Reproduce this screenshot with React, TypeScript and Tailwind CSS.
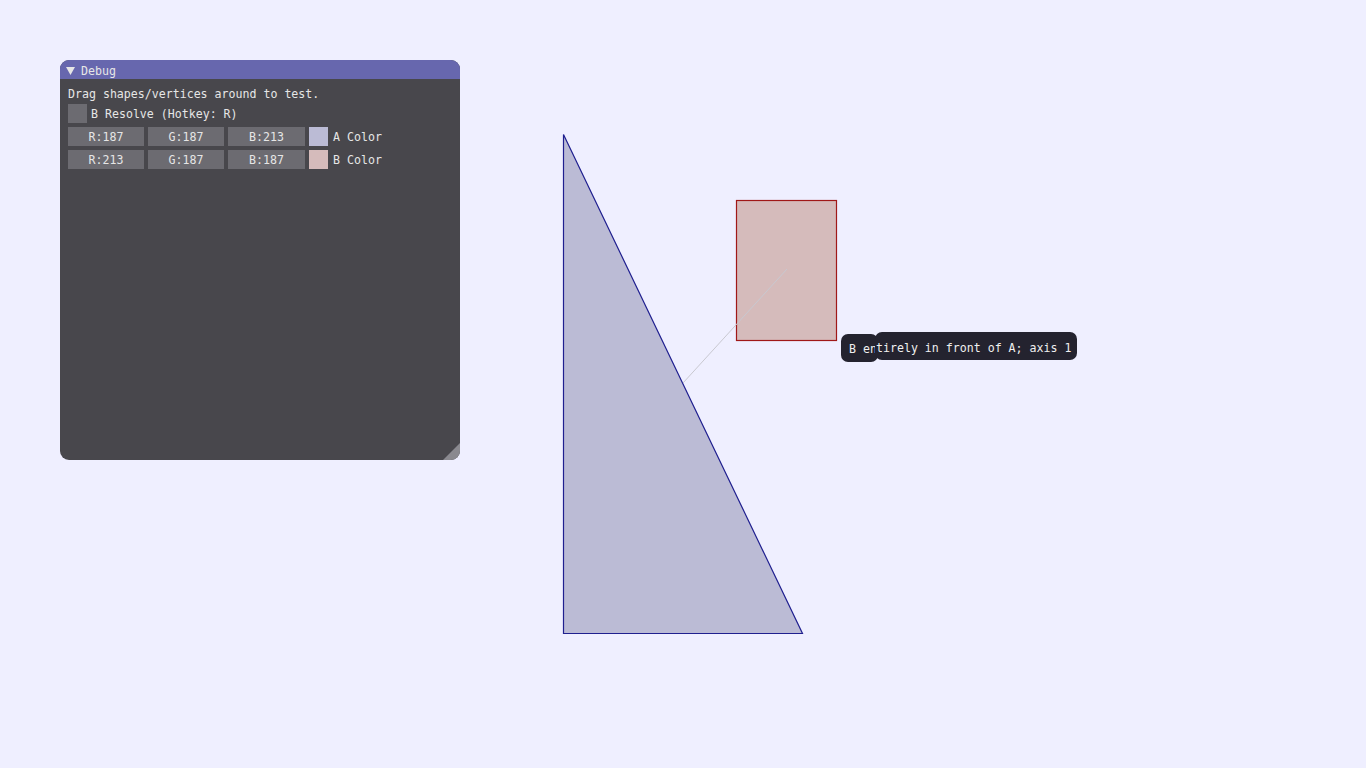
import React from 'react';

const mono = { fontFamily: '"DejaVu Sans Mono", "Liberation Mono", monospace' };

function Field({ label, wide }: { label: string; wide?: boolean }) {
  return (
    <div className={`${wide ? 'w-[77px]' : 'w-[76px]'} h-[19px] bg-[#6c6b71] flex items-center justify-center text-[#e6e6e6]`}>
      <span className="relative top-px">{label}</span>
    </div>
  );
}

function ColorRow({ r, g, b, name, swatch }: { r: string; g: string; b: string; name: string; swatch: string }) {
  return (
    <div className="flex items-center gap-1 h-[19px]">
      <Field label={r} />
      <Field label={g} />
      <Field label={b} wide />
      <div className={`w-[19px] h-[19px] ${swatch}`} />
      <span className="relative top-px ml-px text-[#e6e6e6]">{name}</span>
    </div>
  );
}

export default function App() {
  return (
    <div className="relative w-[1366px] h-[768px] bg-[#efefff] overflow-hidden text-[11.6px] leading-[13px]" style={mono}>
      {/* canvas shapes */}
      <svg className="absolute inset-0" width="1366" height="768" viewBox="0 0 1366 768">
        <polygon points="563.5,134.5 563.5,633.5 802.5,633.5" fill="#bbbbd5" stroke="#1f1f8f" strokeWidth="1.2" />
        <rect x="736.5" y="200.5" width="100" height="140" fill="#d5bbbb" stroke="#a01818" strokeWidth="1.2" />
        <line x1="787" y1="269" x2="683" y2="383" stroke="#c8c8d0" strokeWidth="1" />
      </svg>

      {/* tooltip */}
      <div className="absolute left-[841px] top-[334px] w-[37px] h-[28px] rounded-[7px] bg-[#24232f] text-[#f0f0f0] flex items-center pl-2">
        <span className="relative top-px whitespace-nowrap overflow-hidden w-[27px]">B en</span>
      </div>
      <div className="absolute left-[875px] top-[332px] w-[202px] h-[28px] rounded-[7px] bg-[#24232f] text-[#f0f0f0] flex items-center pl-px">
        <span className="relative top-[2px] whitespace-nowrap">tirely in front of A; axis 1</span>
      </div>

      {/* Debug window */}
      <div className="absolute left-[60px] top-[60px] w-[400px] h-[400px] rounded-[9px] overflow-hidden bg-[#48474c] flex flex-col">
        <div className="h-[19px] bg-[#6767ae] flex items-center pl-[6px] gap-[6px] text-[#e6e6e6]">
          <svg className="relative top-px" width="9" height="8" viewBox="0 0 9 8">
            <polygon points="0,0 9,0 4.5,8" fill="#e6e6e6" />
          </svg>
          <span className="relative top-[2px]">Debug</span>
        </div>
        <div className="relative flex-1 flex flex-col gap-1 pl-2 pt-[8px] text-[#e6e6e6]">
          <div className="h-[13px] whitespace-nowrap relative top-px">Drag shapes/vertices around to test.</div>
          <div className="flex items-center gap-1 h-[19px]">
            <div className="w-[19px] h-[19px] bg-[#6c6b71]" />
            <span className="relative top-px">B Resolve (Hotkey: R)</span>
          </div>
          <ColorRow r="R:187" g="G:187" b="B:213" name="A Color" swatch="bg-[#bbbbd5]" />
          <ColorRow r="R:213" g="G:187" b="B:187" name="B Color" swatch="bg-[#d5bbbb]" />
          <svg className="absolute right-0 bottom-0" width="17" height="17" viewBox="0 0 17 17">
            <polygon points="17,0 17,17 0,17" fill="#8a898f" />
          </svg>
        </div>
      </div>
    </div>
  );
}
